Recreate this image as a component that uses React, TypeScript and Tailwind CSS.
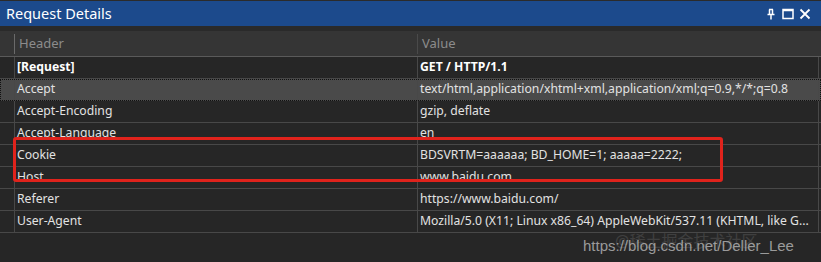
import React from "react";

const rows: { name: string; value: string; bold?: boolean; selected?: boolean }[] = [
  { name: "[Request]", value: "GET / HTTP/1.1", bold: true },
  { name: "Accept", value: "text/html,application/xhtml+xml,application/xml;q=0.9,*/*;q=0.8", selected: true },
  { name: "Accept-Encoding", value: "gzip, deflate" },
  { name: "Accept-Language", value: "en" },
  { name: "Cookie", value: "BDSVRTM=aaaaaa; BD_HOME=1; aaaaa=2222;" },
  { name: "Host", value: "www.baidu.com" },
  { name: "Referer", value: "https://www.baidu.com/" },
  { name: "User-Agent", value: "Mozilla/5.0 (X11; Linux x86_64) AppleWebKit/537.11 (KHTML, like G..." },
];

const App: React.FC = () => {
  return (
    <div
      className="relative w-[821px] h-[262px] overflow-hidden bg-[#262626] text-[12.2px] text-[#e2e2e2]"
      style={{ fontFamily: '"Noto Sans", "Noto Sans CJK SC", sans-serif' }}
    >
      {/* Title bar */}
      <div className="h-[26px] border-t border-[#2b2b2b] bg-[#1c4a8c] flex items-center justify-between pl-[6px] pr-[10px]">
        <span className="text-[14.5px] text-white leading-none">Request Details</span>
        <div className="flex items-center gap-[5px] text-white">
          <svg width="12" height="12" viewBox="0 0 12 12" fill="none" stroke="white" strokeWidth="1.5">
            <path d="M4 1.5h4M4.5 1.5v5M7.5 1.5v5M2.5 6.5h7M6 6.5v5" />
          </svg>
          <svg width="12" height="12" viewBox="0 0 12 12" fill="none" stroke="white">
            <rect x="1" y="1.5" width="10" height="9" strokeWidth="1.5" />
            <path d="M1 2.5h10" strokeWidth="1.5" />
          </svg>
          <svg width="12" height="12" viewBox="0 0 12 12" fill="none" stroke="white" strokeWidth="1.8">
            <path d="M1.5 1.5l9 9M10.5 1.5l-9 9" />
          </svg>
        </div>
      </div>
      <div className="h-[5px] bg-[#2a2a2a]" />

      {/* Column header */}
      <div className="grid grid-cols-[15px_403px_401px] h-[26px] bg-[#353535] border-b border-[#5a5a5a]">
        <div className="border-r border-[#6a6a6a] my-[3px]" />
        <div className="flex items-center pl-[4px] text-[13px] text-[#8c8c8c] border-r border-[#4a4a4a] my-[3px]">Header</div>
        <div className="flex items-center pl-[4px] text-[13px] text-[#8c8c8c]">Value</div>
      </div>

      {/* Rows */}
      {rows.map((r) => (
        <div
          key={r.name}
          className={`grid grid-cols-[15px_403px_401px] h-[22px] border-b border-[#484848] ${
            r.selected ? "bg-[#4a4a4a] outline-1 outline-dotted outline-offset-[-1px] outline-[#111]" : ""
          }`}
        >
          <div className="border-r border-[#484848]" />
          <div
            className={`flex items-center pl-[2px] border-r border-[#484848] whitespace-nowrap overflow-hidden ${
              r.bold ? "font-bold text-white" : ""
            }`}
          >
            {r.name}
          </div>
          <div
            className={`flex items-center pl-[2px] border-r border-[#484848] whitespace-nowrap overflow-hidden ${
              r.bold ? "font-bold text-white" : ""
            }`}
          >
            {r.value}
          </div>
        </div>
      ))}

      {/* Red highlight box */}
      <div className="absolute left-[13px] top-[137px] w-[710px] h-[45px] border-[3px] border-[#e0231c] rounded-[3px]" />

      {/* Watermark */}
      <div className="absolute left-[615px] top-[229px] text-[16px] text-[#d0d0d0] opacity-15 whitespace-nowrap">
        @稀土掘金技术社区
      </div>
      <div
        className="absolute left-[583px] top-[235px] text-[15px] text-[#b8b8b8] opacity-80 whitespace-nowrap"
        style={{ fontFamily: '"Liberation Sans", sans-serif' }}
      >
        https://blog.csdn.net/Deller_Lee
      </div>
    </div>
  );
};

export default App;
